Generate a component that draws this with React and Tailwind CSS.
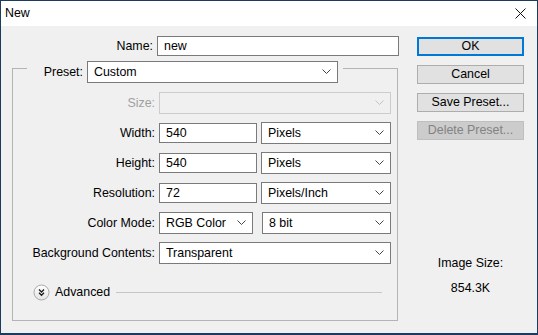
import React from 'react';

// Photoshop "New" document dialog.
const FONT = "font-['Liberation_Sans',Arial,sans-serif]";

function Chevron({ disabled }) {
  return (
    <svg width="9" height="6" viewBox="0 0 9 6" className="shrink-0">
      <polyline
        points="0.5,0.5 4.5,4.5 8.5,0.5"
        fill="none"
        stroke={disabled ? '#c4c4c4' : '#444'}
        strokeWidth="1"
      />
    </svg>
  );
}

function Select({ value, w, disabled }) {
  return (
    <div
      className={`flex h-[22px] items-center justify-between border pl-[6px] pr-[6px] ${w} ${
        disabled ? 'border-[#cccccc] bg-[#f0f0f0]' : 'border-[#7a7a7a] bg-white'
      }`}
    >
      <span className="leading-none text-black">{value}</span>
      <Chevron disabled={disabled} />
    </div>
  );
}

function Input({ value, w }) {
  return (
    <div className={`flex h-[20px] items-center border border-[#7a7a7a] bg-white pl-[6px] ${w}`}>
      <span className="leading-none text-black">{value}</span>
    </div>
  );
}

function Row({ label, disabled, children, className = '' }) {
  return (
    <div className={`flex h-[22px] items-center ${className}`}>
      <span className={`w-[142px] whitespace-nowrap text-right ${disabled ? 'text-[#a0a0a0]' : 'text-black'}`}>
        {label}
      </span>
      <div className="ml-[4px] flex items-center gap-[4px]">{children}</div>
    </div>
  );
}

function Button({ children, primary, disabled }) {
  const cls = primary
    ? 'border-2 border-[#0078d7] bg-[#e1e1e1] text-black'
    : disabled
      ? 'border border-[#bfbfbf] bg-[#cccccc] text-[#838383]'
      : 'border border-[#adadad] bg-[#e1e1e1] text-black';
  return (
    <div className={`flex h-[19px] w-[107px] items-center justify-center ${cls}`}>
      <span className="leading-none">{children}</span>
    </div>
  );
}

function AdvancedIcon() {
  return (
    <svg width="17" height="17" viewBox="0 0 17 17" className="shrink-0">
      <defs>
        <linearGradient id="adv" x1="0" y1="0" x2="0" y2="1">
          <stop offset="0" stopColor="#ffffff" />
          <stop offset="1" stopColor="#e4e4e4" />
        </linearGradient>
      </defs>
      <circle cx="8.5" cy="8.5" r="7.5" fill="url(#adv)" stroke="#a9a9a9" />
      <polyline points="6,5.5 8.5,8 11,5.5" fill="none" stroke="#1a1a1a" strokeWidth="1.3" />
      <polyline points="6,8.8 8.5,11.3 11,8.8" fill="none" stroke="#1a1a1a" strokeWidth="1.3" />
    </svg>
  );
}

export default function App() {
  return (
    <div
      className={`${FONT} flex h-[335px] w-[538px] flex-col border border-b-2 border-[#1c3b60] text-[12.4px] text-black`}
    >
      {/* title bar */}
      <div className="flex h-[25px] shrink-0 items-center justify-between bg-white pl-[4px] pr-[11px]">
        <span className="leading-none">New</span>
        <svg width="11" height="11" viewBox="0 0 11 11">
          <path d="M0.5 0.5 L10.5 10.5 M10.5 0.5 L0.5 10.5" stroke="#111" strokeWidth="1" />
        </svg>
      </div>

      <div className="flex flex-1 bg-[#f0f0f0]">
        {/* left column */}
        <div className="w-[398px] shrink-0 pl-[11px]">
          <div className="mt-[10px] flex h-[20px] items-center">
            <span className="w-[143px] text-right">Name:</span>
            <div className="ml-[4px]">
              <Input value="new" w="w-[242px]" />
            </div>
          </div>

          <div className="mt-[12px] h-[253px] w-[386px] border border-[#b4b4b4]">
            {/* legend */}
            <div className="-mt-[8px] ml-[14px] flex w-[316px] items-center justify-end gap-[4px] bg-[#f0f0f0] pr-[5px]">
              <span>Preset:</span>
              <Select value="Custom" w="w-[251px]" />
            </div>

            <Row label="Size:" disabled className="mt-[9px]">
              <Select value="" w="w-[232px]" disabled />
            </Row>
            <Row label="Width:" className="mt-[8px]">
              <Input value="540" w="w-[98px]" />
              <Select value="Pixels" w="w-[130px]" />
            </Row>
            <Row label="Height:" className="mt-[8px]">
              <Input value="540" w="w-[98px]" />
              <Select value="Pixels" w="w-[130px]" />
            </Row>
            <Row label="Resolution:" className="mt-[8px]">
              <Input value="72" w="w-[98px]" />
              <Select value="Pixels/Inch" w="w-[130px]" />
            </Row>
            <div className="mt-[8px] flex h-[22px] items-center">
              <span className="w-[142px] text-right">Color Mode:</span>
              <div className="ml-[4px] flex items-center gap-[9px]">
                <Select value="RGB Color" w="w-[94px]" />
                <Select value="8 bit" w="w-[129px]" />
              </div>
            </div>
            <Row label="Background Contents:" className="mt-[8px]">
              <Select value="Transparent" w="w-[232px]" />
            </Row>

            <div className="ml-[20px] mr-[15px] mt-[20px] flex h-[17px] items-center">
              <AdvancedIcon />
              <span className="ml-[5px] leading-none">Advanced</span>
              <div className="ml-[6px] h-px flex-1 bg-[#c6c6c6]" />
            </div>
          </div>
        </div>

        {/* right column */}
        <div className="ml-[18px] flex w-[107px] flex-col items-center">
          <div className="mt-[11px] flex flex-col gap-[9px]">
            <Button primary>OK</Button>
            <Button>Cancel</Button>
            <Button>Save Preset...</Button>
            <Button disabled>Delete Preset...</Button>
          </div>
          <span className="mt-[116px] leading-[15px]">Image Size:</span>
          <span className="mt-[10px] leading-[15px]">854.3K</span>
        </div>
      </div>
    </div>
  );
}
